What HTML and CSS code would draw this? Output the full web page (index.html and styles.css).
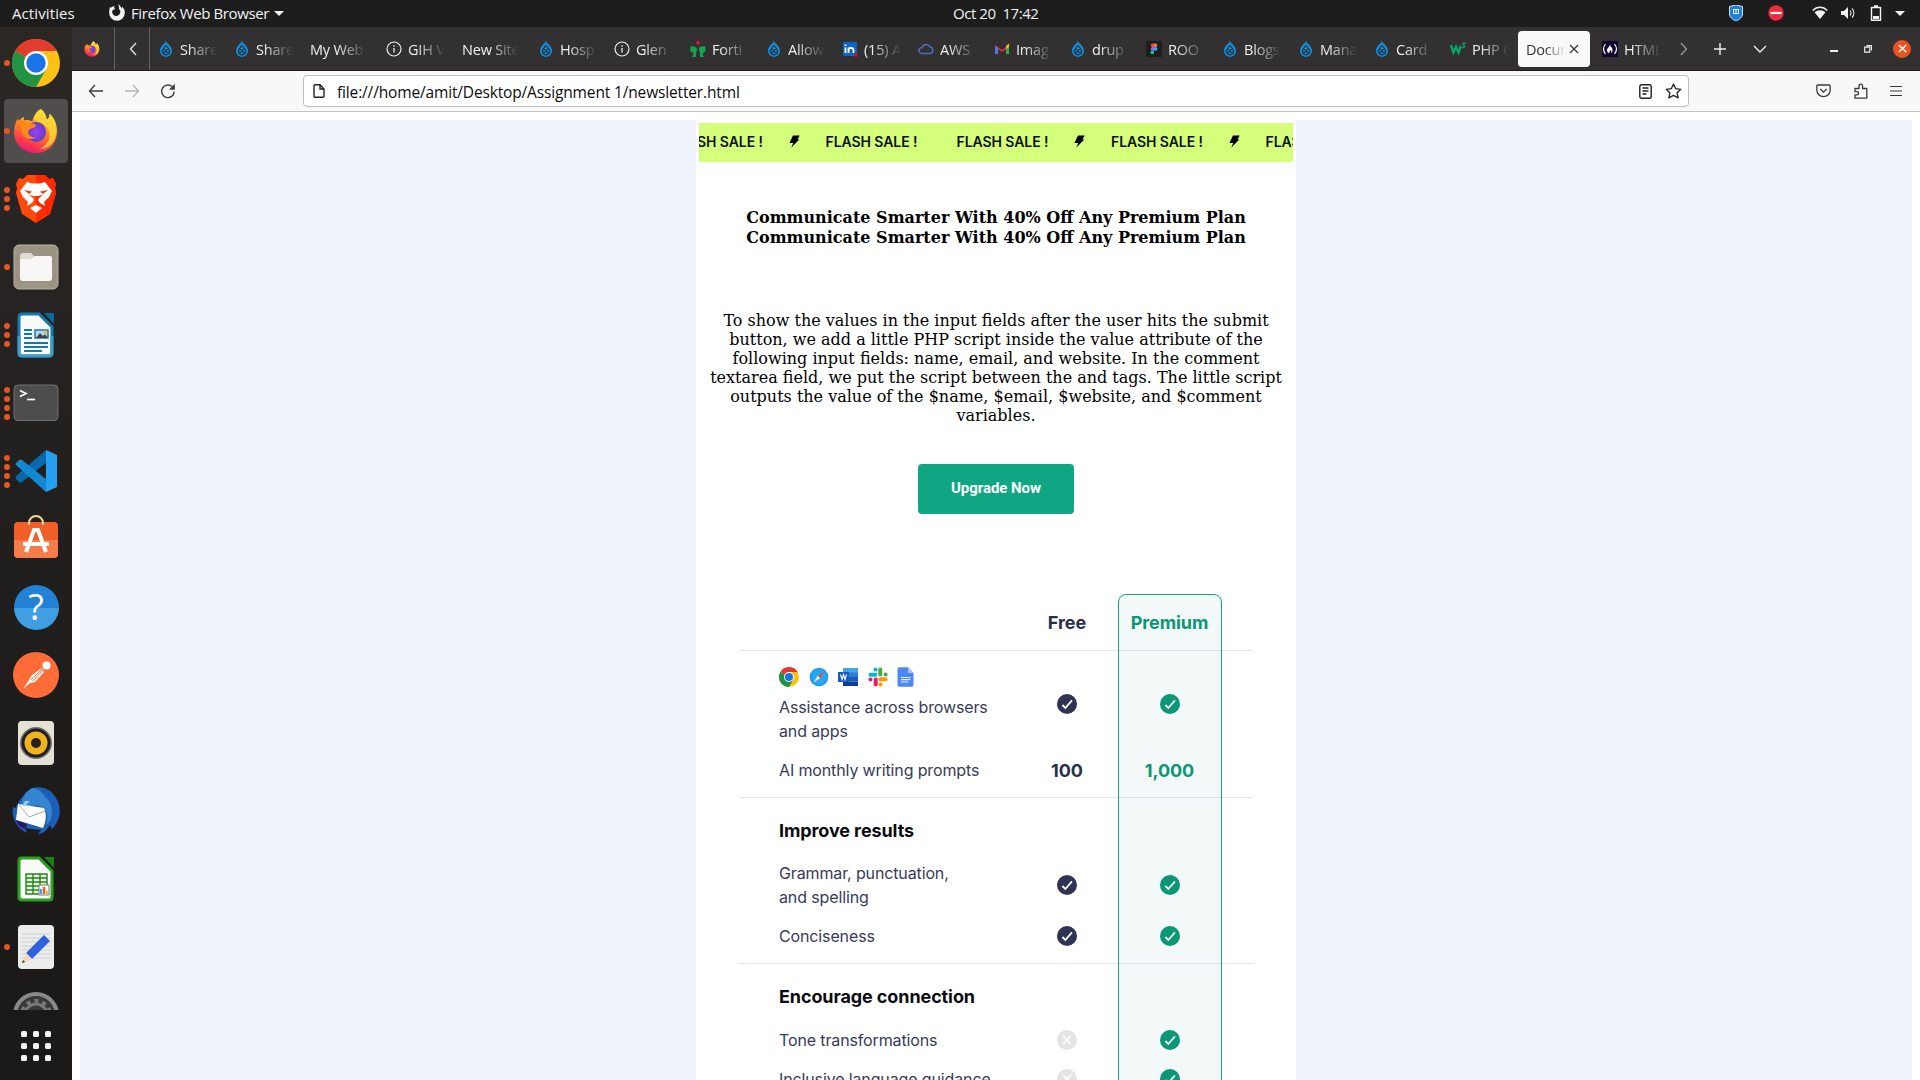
FILE: index.html
```html
<!DOCTYPE html>
<html lang="en">
<head>
<meta charset="utf-8">
<title>Document</title>
<link rel="stylesheet" href="styles.css">
</head>
<body>
<svg class="defs" width="0" height="0">
  <defs>
    <symbol id="drupal" viewBox="0 0 16 16"><path d="M8 0C7 2.500 2 4.800 2 10a6 6 0 0 0 12 0C14 4.800 9 2.500 8 0z" fill="#0c8fdc"/><path d="M8 4.500L10.800 8a3.500 3.500 0 1 1-5.600 0z M5.800 12.400l4-4.200M10.200 12.400L6 8.200" fill="none" stroke="#29303a" stroke-width="1.200"/></symbol>
    <symbol id="info" viewBox="0 0 16 16"><circle cx="8" cy="8" r="7" fill="none" stroke="#eee" stroke-width="1.200"/><path d="M8 7v4.500M8 4.300v1.400" stroke="#eee" stroke-width="1.300"/></symbol>
    <symbol id="chrome" viewBox="0 0 48 48"><circle cx="24" cy="24" r="24" fill="#fbc116"/><path d="M24 24L3.200 12A24 24 0 0 1 44.800 12z" fill="#e33b2e"/><path d="M24 24L3.200 12A24 24 0 0 0 24 48L34.400 30z" fill="#229342"/><path d="M24 12h20.800L34.400 30z" fill="#fbc116"/><circle cx="24" cy="24" r="12" fill="#fff"/><circle cx="24" cy="24" r="9.700" fill="#1a73e8"/></symbol>
    <symbol id="firefox" viewBox="0 0 48 48"><path d="M29 1c4 3 6 7 6 11 3-1 3-4 3-6 5 4 8 11 8 18C46 38 36 47 24 47S1 38 1 25c0-6 2-11 4-14l1 3c1-2 3-4 5-5l1 4c3-1 6 0 8 1 2-7 5-11 9-13z" fill="url(#ffg)"/><path d="M29 1c4 3 6 7 6 11 3-1 3-4 3-6 7 6 9 16 6 25-3 8-10 12-17 12 10-4 14-14 9-22-3-5-12-8-14-9 1-5 3-8 7-11z" fill="#ffd83a" opacity=".8"/><circle cx="24" cy="25" r="10.500" fill="url(#ffp)"/><path d="M5 13c5-1 9 2 12 3 4 0 7 1 7 3-2 2-7 2-8 5-1 4 3 7 8 7-8 4-15-1-15-8 0-4-2-6-4-10z" fill="#ff8a16"/></symbol>
    <linearGradient id="ffg" x1=".7" y1="0" x2=".3" y2="1"><stop offset="0" stop-color="#ffe53b"/><stop offset=".45" stop-color="#ff8a1e"/><stop offset=".8" stop-color="#ff3750"/><stop offset="1" stop-color="#e5157a"/></linearGradient>
    <radialGradient id="ffp"><stop offset="0" stop-color="#a63bf0"/><stop offset="1" stop-color="#5a42c8"/></radialGradient>
    <symbol id="yes" viewBox="0 0 20 20"><circle cx="10" cy="10" r="10" fill="currentColor"/><path d="M5.400 11l2.900 3L15 6.400" fill="none" stroke="#fff" stroke-width="1.800"/></symbol>
    <symbol id="no" viewBox="0 0 20 20"><circle cx="10" cy="10" r="10" fill="#e4e4e4"/><path d="M6 5.800l8 8.400M14 5.800l-8 8.400" stroke="#fff" stroke-width="1.700"/></symbol>
    <symbol id="bolt" viewBox="0 0 11 13"><path d="M4 .5h6.700L8.500 4.500h1.800L2.200 12.700 4.200 8H.4z" fill="#000"/></symbol>
  </defs>
</svg>

<div class="desktop">
  <header class="topbar">
    <span class="activities">Activities</span>
    <span class="app-menu"><svg width="16" height="18" viewBox="0 0 16 18"><path d="M9 0c1 2 1 3 1 5a4 4 0 1 1-6.500 1.500C4 5 6 5.500 6.500 5 5 4.500 5 3 5.500 2 4 2 2.500 3 2 4L1.500 2.500C.5 4 .2 6 .2 9a7.800 7.800 0 0 0 15.600 0c0-3-1-5-3-6.500V5C12 3 11 1 9 0z" fill="#f2f2f2"/></svg><span class="app-name">Firefox Web Browser</span><i class="caret"></i></span>
    <span class="clock">Oct 20&nbsp; 17:42</span>
    <span class="tray">
      <svg width="14" height="16" viewBox="0 0 14 16"><path d="M7 0l6.500 1.500V9c0 3-3 5.500-6.500 7C3.500 14.500.5 12 .5 9V1.500z" fill="#1a80d8" stroke="#c9e2f5"/><path d="M4.500 4.500h5v4h-5z" stroke="#fff" fill="none"/><path d="M7 5v3" stroke="#fff"/></svg>
      <svg class="dnd" width="16" height="16" viewBox="0 0 16 16"><circle cx="8" cy="8" r="7.700" fill="#f32a3c"/><path d="M2.500 8h11" stroke="#fff" stroke-width="2.200"/></svg>
      <svg class="wifi" width="16" height="14" viewBox="0 0 16 14"><path d="M.8 4.500C5 .2 11 .2 15.200 4.500" fill="none" stroke="#eee" stroke-width="1.500"/><path d="M2.500 6.200C6 3.500 10 3.500 13.500 6.200L8 13z" fill="#f2f2f2"/></svg>
      <svg class="vol" width="16" height="14" viewBox="0 0 16 14"><path d="M1 5h3l4-4v12L4 9H1z" fill="#f2f2f2"/><path d="M10 4.500c1.300 1.500 1.300 3.500 0 5M12 2.500c2.500 2.500 2.500 6.500 0 9" fill="none" stroke="#ddd" stroke-width="1.100"/></svg>
      <svg class="batt" width="12" height="16" viewBox="0 0 12 16"><path d="M1.500 2.500h9v12.700h-9zM4 1h4" fill="none" stroke="#f2f2f2" stroke-width="1.400"/><path d="M3 11h6v3H3z" fill="#f2f2f2"/></svg>
      <i class="caret"></i>
    </span>
  </header>

  <div class="workspace">
    <nav class="dock">
      <div class="apps">
        <div class="app"><span class="dots"><i></i></span><svg width="48" height="48"><use href="#chrome"/></svg></div>
        <div class="app current"><span class="dots"><i></i></span><svg width="46" height="46"><use href="#firefox"/></svg></div>
        <div class="app"><span class="dots"><i></i><i></i><i></i></span><svg width="42" height="50" viewBox="0 0 42 50"><path d="M12 1h18l4 4 4-1 3 6-1 4 1 5-6 21-14 9L7 40 1 19l1-5-1-4 3-6 4 1z" fill="#ff4a0a"/><path d="M21 1h9l4 4 4-1 3 6-1 4 1 5-6 21-14 9z" fill="#ff2000" opacity=".8"/><path d="M12 8l5 1.500h8L30 8l7 9-3 6-5 5 1 4-5-3-2-3 1-2 4-3-5 1h-4l-5-1 4 3 1 2-2 3-5 3 1-4-5-5-3-6z" fill="#fff"/><path d="M9 16l8 1.500-3 2.500zM33 16l-8 1.500 3 2.500z" fill="#f5380f"/><path d="M21 31l6 3-6 5-6-5z" fill="#fff"/></svg></div>
        <div class="app"><span class="dots"><i></i></span><svg width="46" height="46" viewBox="0 0 46 46"><rect x="1" y="1" width="44" height="44" rx="5" fill="#9c9482" stroke="#b9b3a4"/><path d="M7 12q0-3 3-3h8l4 4h14q2 0 2 3v4H7z" fill="#dedbd0"/><path d="M7 17q0-2 2-2h9l4-3h15q2 0 2 2v20q0 3-3 3H10q-3 0-3-3z" fill="#f8f7f5"/></svg></div>
        <div class="app"><span class="dots"><i></i><i></i><i></i></span><svg width="38" height="46" viewBox="0 0 38 46"><path d="M5 2h17l13 13v26q0 3-3 3H5q-3 0-3-3V5q0-3 3-3z" fill="#fafafa" stroke="#1679ae" stroke-width="3"/><path d="M2 24v17q0 3 3 3h27q3 0 3-3V24" fill="none" stroke="#3c9bcb" stroke-width="3"/><path d="M27 1h10v11z" fill="#0b6ba0"/><path d="M7 18h8M7 22h8M7 26h8M7 31h24M7 35h24M7 39h18" stroke="#1679ae" stroke-width="2"/><path d="M18 18h13v8H18z" fill="#b5d9ed" stroke="#1679ae" stroke-width="1.500"/><path d="M19 26l4-5 3 3 2-2 3 4z" fill="#444"/><circle cx="28.500" cy="20" r="1.700" fill="#f4ba1c"/></svg></div>
        <div class="app"><span class="dots"><i></i><i></i><i></i><i></i></span><svg width="46" height="38" viewBox="0 0 46 38"><rect x="1" y="1" width="44" height="35.500" rx="4" fill="#4d4d4d" stroke="#707070"/><path d="M7 6.500l6 3-6 3" fill="none" stroke="#fff" stroke-width="1.700"/><path d="M14 15.500h8" stroke="#fff" stroke-width="1.700"/></svg></div>
        <div class="app"><span class="dots"><i></i><i></i><i></i><i></i></span><svg width="42" height="42" viewBox="0 0 42 42"><path d="M31 0L1 26q-1 2 0 3l3 3q1 1 3 0L32 12z" fill="#0768ab"/><path d="M4 10q2-1 3 0l25 20-1 12L1 15q-1-1 0-2z" fill="#1288d3"/><path d="M31 0l11 5v32l-11 5z" fill="#26a0f3"/></svg></div>
        <div class="app"><svg class="shop" width="46" height="46" viewBox="0 0 46 46"><rect x="1" y="8" width="44" height="36" rx="4" fill="#f05f28"/><path d="M1 26h44v14q0 4-4 4H5q-4 0-4-4z" fill="#f67c4c"/><path d="M16 11V9a7 7 0 0 1 14 0v2" fill="none" stroke="#f8d5a5" stroke-width="2"/><path d="M13 38l8-22h4l8 22M10 30h26" fill="none" stroke="#fff" stroke-width="4"/></svg></div>
        <div class="app"><span class="help">?</span></div>
        <div class="app"><svg width="46" height="46" viewBox="0 0 46 46"><circle cx="23" cy="23" r="23" fill="#ff6c37"/><circle cx="33.500" cy="13.500" r="4" fill="#fff"/><path d="M29 16l2 4-9 10-5 1-7 6 6-9 3-5z" fill="#fff"/><path d="M18 28l11-11M20 29l10-11" stroke="#ff6c37"/></svg></div>
        <div class="app"><svg width="38" height="46" viewBox="0 0 38 46"><rect x="1" y="1" width="36" height="44" rx="4" fill="#e5e0d4"/><circle cx="19" cy="23" r="16" fill="#747171"/><circle cx="19" cy="23" r="14.500" fill="#211e2c"/><circle cx="19" cy="23" r="11.500" fill="#efb41b"/><circle cx="19" cy="23" r="5" fill="#222"/></svg></div>
        <div class="app"><svg width="48" height="48" viewBox="0 0 48 48"><path d="M20 1c8-2 17 0 22 7 8 10 8 23-2 34l-2-4c-3 5-7 9-12 9l3-4-16-2 2 5C4 41-1 30 1 20l3 1C6 14 11 9 12 8c2-4 6-5 8-7z" fill="#1d5fb8"/><path d="M20 1c6 1 11 4 13 9 7 5 9 14 5 24l-4 4c3-9 1-16-6-19-6-2-13 0-18 5-2-7 1-18 10-23z" fill="#3585d0"/><path d="M6 17l26 4c3 7 2 13-1 20L4 33z" fill="#fff"/><path d="M7 18l10 12 16-6" fill="none" stroke="#aaa"/><path d="M13 14q-3 4-1 6l6-6z" fill="#8fd0f0"/><path d="M4 33l11 4-1 5C9 41 5 38 4 33z" fill="#2b1669"/></svg></div>
        <div class="app"><svg width="38" height="46" viewBox="0 0 38 46"><path d="M5 2h17l13 13v26q0 3-3 3H5q-3 0-3-3V5q0-3 3-3z" fill="#fafafa" stroke="#2aa01f" stroke-width="3"/><path d="M27 1h10v11z" fill="#168016"/><path d="M9 18h21v20H9zM9 22h21M9 26h21M9 30h21M9 34h21M16 18v20M23 18v20" fill="#e7f6e3" stroke="#27831b" stroke-width="1.400"/><path d="M22 29h10v10H22z" fill="#fff" stroke="#777"/><path d="M24 33v5" stroke="#35a7dc" stroke-width="2"/><path d="M27 31v7" stroke="#e85d21" stroke-width="2.500"/><path d="M30 35v3" stroke="#f4bd23" stroke-width="2"/></svg></div>
        <div class="app"><span class="dots"><i></i></span><svg width="38" height="46" viewBox="0 0 38 46"><rect x="1" y="1" width="36" height="44" rx="4" fill="#ececec"/><path d="M5 10h28M5 14h28M5 18h28M5 22h28M5 26h28M5 30h28M5 34h28" stroke="#d0d0d0"/><path d="M27 11l6 6-18 18-6-6z" fill="#2e61dd"/><path d="M9 29l6 6-10 4z" fill="#f5d8b6"/><path d="M6 36l2 2-3 1z" fill="#333"/></svg></div>
        <div class="app"><svg width="46" height="46" viewBox="0 0 46 46"><circle cx="23" cy="23" r="21" fill="#393939" stroke="#898989" stroke-width="4"/><circle cx="23" cy="23" r="11" fill="none" stroke="#777" stroke-width="3"/><circle cx="23" cy="23" r="14" fill="none" stroke="#777" stroke-width="4" stroke-dasharray="4 4"/></svg></div>
      </div>
      <div class="grid-button"><i></i><i></i><i></i><i></i><i></i><i></i><i></i><i></i><i></i></div>
    </nav>

    <main class="browser">
      <div class="tabbar">
        <div class="pinned"><svg width="16" height="16"><use href="#firefox"/></svg></div>
        <div class="scroll"><svg width="8" height="14" viewBox="0 0 8 14"><path d="M7 1L1.500 7 7 13" fill="none" stroke="#ddd" stroke-width="1.400"/></svg></div>
        <div class="tabs">
          <div class="tab"><svg class="fav"><use href="#drupal"/></svg><span>Share</span></div>
          <div class="tab"><svg class="fav"><use href="#drupal"/></svg><span>Share</span></div>
          <div class="tab"><span>My Web</span></div>
          <div class="tab"><svg class="fav"><use href="#info"/></svg><span>GIH V</span></div>
          <div class="tab"><span>New Site</span></div>
          <div class="tab"><svg class="fav"><use href="#drupal"/></svg><span>Hosp</span></div>
          <div class="tab"><svg class="fav"><use href="#info"/></svg><span>Glen</span></div>
          <div class="tab"><svg class="fav" viewBox="0 0 16 16"><circle cx="8" cy="1.800" r="1.800" fill="#e5173f"/><path d="M1 5c3 1 5 0 6 3 0 3-2 4-1 5v3H2c2-3 2-4 0-5-2 0-2-3-1-6zM15 5c-3 1-6 0-6 3 0 3 2 4 1 5v3h4c-2-3-1-4 0-5 2 0 2-3 1-6z" fill="#10a84c"/></svg><span>Forti</span></div>
          <div class="tab"><svg class="fav"><use href="#drupal"/></svg><span>Allow</span></div>
          <div class="tab"><svg class="fav" viewBox="0 0 16 16"><rect x="1" y="1" width="14" height="14" rx="1" fill="#0a66c2"/><path d="M3.500 6.500V12M3.500 3.500v1.500M6.500 12V6.500M6.500 9q0-2 2.500-2t2.500 2v3" fill="none" stroke="#fff" stroke-width="1.800"/><circle cx="14" cy="14" r="2" fill="#d11124"/></svg><span>(15) A</span></div>
          <div class="tab"><svg class="fav" viewBox="0 0 16 16"><path d="M4 12.500a3 3 0 0 1 0-6 4.300 4.300 0 0 1 8-.5 3.300 3.300 0 0 1 0 6.500z" fill="none" stroke="#4a6fc0" stroke-width="1.400"/></svg><span>AWS</span></div>
          <div class="tab"><svg class="fav" viewBox="0 0 16 16"><path d="M1 13V4l7 5 7-5v9h-3V8l-4 3-4-3v5z" fill="#ea2f35"/><path d="M1 5v8h3V7z" fill="#4b79ee"/><path d="M12 7v6h3V5z" fill="#35a853"/><path d="M12 5l3-2.500V6l-3 2z" fill="#fbbc04"/></svg><span>Imag</span></div>
          <div class="tab"><svg class="fav"><use href="#drupal"/></svg><span>drup</span></div>
          <div class="tab"><svg class="fav" viewBox="0 0 16 16"><path d="M0 0h16v16H0z" fill="#1e1e1e"/><path d="M8 2.500H6.500a1.800 1.800 0 0 0 0 3.600H8z" fill="#f24e1e"/><path d="M8 2.500h1.500a1.800 1.800 0 0 1 0 3.600H8z" fill="#ff7262"/><path d="M8 6.100H6.500a1.800 1.800 0 0 0 0 3.600H8z" fill="#a259ff"/><circle cx="9.600" cy="7.900" r="1.800" fill="#1abcfe"/><path d="M8 9.700H6.500A1.800 1.800 0 1 0 8 11.500z" fill="#0acf83"/></svg><span>ROO</span></div>
          <div class="tab"><svg class="fav"><use href="#drupal"/></svg><span>Blogs</span></div>
          <div class="tab"><svg class="fav"><use href="#drupal"/></svg><span>Mana</span></div>
          <div class="tab"><svg class="fav"><use href="#drupal"/></svg><span>Card</span></div>
          <div class="tab"><svg class="fav" viewBox="0 0 16 16"><path d="M.8 4l2.700 7.500L6 6l2.500 5.500L10.800 5" fill="none" stroke="#05a467" stroke-width="2.500"/><path d="M12 2h3l-2 2.200q2 0 1.500 1.800-.5 1-2.500.5" fill="none" stroke="#05a467" stroke-width="1.200"/></svg><span>PHP C</span></div>
          <div class="tab active"><span>Docum</span><svg width="10" height="10" viewBox="0 0 10 10"><path d="M1 1l8 8M9 1L1 9" stroke="#333" stroke-width="1.200"/></svg></div>
          <div class="tab"><svg class="fav" viewBox="0 0 16 16"><path d="M0 0h16v16H0z" fill="#12062e"/><path d="M3.500 3q-4 5 0 10M12.500 3q4 5 0 10" fill="none" stroke="#fff" stroke-width="1.200"/><path d="M8 3c0 3 2.500 3 2.500 6 0 2-.5 3-1.500 3 1-2 0-2-.5-3 0 1-1.500 1-1 3-2 0-2.500-1.500-2.500-3 0-2 3-3 3-6z" fill="#fff"/></svg><span>HTML</span></div>
        </div>
        <div class="tab-actions">
          <svg class="more" width="8" height="14" viewBox="0 0 8 14"><path d="M1 1l5.500 6L1 13" fill="none" stroke="#999" stroke-width="1.300"/></svg>
          <svg class="plus" width="12" height="12" viewBox="0 0 12 12"><path d="M6 0v12M0 6h12" stroke="#eee" stroke-width="1.400"/></svg>
          <svg class="list" width="14" height="8" viewBox="0 0 14 8"><path d="M1 1l6 6 6-6" fill="none" stroke="#eee" stroke-width="1.400"/></svg>
          <i class="minimize"></i>
          <svg class="restore" width="8" height="8" viewBox="0 0 8 8"><path d="M.7 2.200h5v5h-5zM2.500.6h5v5" fill="none" stroke="#eee" stroke-width="1.200"/></svg>
          <span class="close"><svg width="9" height="9" viewBox="0 0 10 10"><path d="M1 1l8 8M9 1L1 9" stroke="#fff" stroke-width="1.500"/></svg></span>
        </div>
      </div>

      <div class="navbar">
        <div class="nav-buttons">
          <svg width="16" height="14" viewBox="0 0 16 14"><path d="M15 7H1.500M7 1L1.500 7 7 13" fill="none" stroke="#3a3a3a" stroke-width="1.300"/></svg>
          <svg width="16" height="14" viewBox="0 0 16 14"><path d="M1 7h13.500M9 1l5.500 6L9 13" fill="none" stroke="#b5b5b5" stroke-width="1.300"/></svg>
          <svg width="16" height="16" viewBox="0 0 16 16"><path d="M14.200 8.500A6.300 6.300 0 1 1 12 3.500" fill="none" stroke="#3a3a3a" stroke-width="1.400"/><path d="M14.800.8v6H9z" fill="#3a3a3a"/></svg>
        </div>
        <div class="urlbar">
          <svg width="12" height="14" viewBox="0 0 12 14"><path d="M1 2q0-1.200 1.200-1.200H7L11 5v7q0 1.200-1.200 1.200H2.200Q1 13.200 1 12zM7 1v4h4" fill="none" stroke="#222" stroke-width="1.400"/></svg>
          <span class="url">file:///home/amit/Desktop/Assignment 1/newsletter.html</span>
          <svg class="reader" width="13" height="15" viewBox="0 0 13 15"><rect x=".8" y=".8" width="11.400" height="13.400" rx="1.800" fill="none" stroke="#222" stroke-width="1.400"/><path d="M3.500 4h6M3.500 7h6M3.500 10h4" stroke="#222" stroke-width="1.300"/></svg>
          <svg width="17" height="16" viewBox="0 0 17 16"><path d="M8.500 1l2.200 4.700 5.100.6-3.700 3.500 1 5.100-4.600-2.500-4.600 2.500 1-5.100L1.200 6.300l5.100-.6z" fill="none" stroke="#222" stroke-width="1.300" stroke-linejoin="round"/></svg>
        </div>
        <div class="nav-tools">
          <svg width="15" height="14" viewBox="0 0 15 14"><path d="M2 1h11q1.200 0 1.200 1.200V6a6.700 6.700 0 0 1-13.400 0V2.200Q.8 1 2 1zM4.300 5l3.200 3.200L10.700 5" fill="none" stroke="#3a3a3a" stroke-width="1.300"/></svg>
          <svg width="14" height="16" viewBox="0 0 14 16"><path d="M1 5.500h4V3a1.800 1.800 0 0 1 3.600 0v2.500h4.200v9.700H1v-3.400h2a1.600 1.600 0 0 0 0-3.200H1z" fill="none" stroke="#3a3a3a" stroke-width="1.300" stroke-linejoin="round"/></svg>
          <svg width="12" height="12" viewBox="0 0 12 12"><path d="M0 1.500h12M0 6h12M0 10.500h12" stroke="#3a3a3a" stroke-width="1.200"/></svg>
        </div>
      </div>

      <div class="viewport">
        <div class="backdrop">
          <article class="letter">
            <div class="banner">
              <div class="track">
                <span>FLASH SALE !</span><svg><use href="#bolt"/></svg><span>FLASH SALE !</span>
                <span class="next">FLASH SALE !</span><svg><use href="#bolt"/></svg><span>FLASH SALE !</span><svg><use href="#bolt"/></svg><span>FLASH SALE !</span>
              </div>
            </div>
            <h1 class="title">Communicate Smarter With 40% Off Any Premium Plan<br>Communicate Smarter With 40% Off Any Premium Plan</h1>
            <p class="intro">To show the values in the input fields after the user hits the submit<br>button, we add a little PHP script inside the value attribute of the<br>following input fields: name, email, and website. In the comment<br>textarea field, we put the script between the and tags. The little script<br>outputs the value of the $name, $email, $website, and $comment<br>variables.</p>
            <a class="upgrade">Upgrade Now</a>

            <section class="plans">
              <div class="row head"><span></span><b>Free</b><b class="premium">Premium</b></div>
              <div class="group first">
                <div class="row">
                  <div class="label">
                    <div class="brands">
                      <svg width="20" height="20"><use href="#chrome"/></svg>
                      <svg width="20" height="20" viewBox="0 0 20 20"><circle cx="10" cy="10" r="9.300" fill="#2694ee"/><circle cx="10" cy="10" r="7.700" fill="#1eaaf4"/><path d="M15.500 4.500L8.800 8.800l2.400 2.400z" fill="#ef4836"/><path d="M4.500 15.500l4.300-6.700 2.400 2.400z" fill="#f1f1f1"/></svg>
                      <svg width="20" height="20" viewBox="0 0 20 20"><path d="M5 1h15v5H5z" fill="#41a5ee"/><path d="M5 5.500h15V10H5z" fill="#2b7cd3"/><path d="M5 10h15v4.500H5z" fill="#185abd"/><path d="M5 14.500h15V19H5z" fill="#103f91"/><path d="M0 5h11v10H0z" fill="#185abd"/><path d="M2.500 7.500l1.500 5 1.500-5 1.500 5 1.500-5" fill="none" stroke="#fff" stroke-width="1.100"/></svg>
                      <svg width="20" height="20" viewBox="0 0 20 20"><g fill="none" stroke-width="4" stroke-linecap="round"><path d="M12.300 2.500v5" stroke="#44ac48"/><path d="M12.500 12.300h5" stroke="#ff9800"/><path d="M7.700 12.500v5" stroke="#e91e63"/><path d="M2.500 7.700h5" stroke="#00bcd4"/></g><circle cx="7.500" cy="2.400" r="2" fill="#00bcd4"/><circle cx="17.600" cy="7.600" r="2" fill="#44ac48"/><circle cx="12.400" cy="17.600" r="2" fill="#ff9800"/><circle cx="2.400" cy="12.400" r="2" fill="#e91e63"/></svg>
                      <svg width="17" height="20" viewBox="0 0 17 20"><path d="M2 .3h9L16.500 6v12q0 1.700-1.700 1.700H2Q.5 19.700.5 18V2Q.5.300 2 .300z" fill="#4b87f5"/><path d="M11 .3L16.500 6H11z" fill="#a4c3fa"/><path d="M4 10.500h9.500M4 12.700h9.500M4 15h7" stroke="#e7effe" stroke-width="1.200"/></svg>
                    </div>
                    Assistance across browsers<br>and apps
                  </div>
                  <svg class="mark"><use href="#yes"/></svg><svg class="mark premium"><use href="#yes"/></svg>
                </div>
                <div class="row"><div class="label">AI monthly writing prompts</div><b>100</b><b class="premium">1,000</b></div>
              </div>
              <div class="group improve">
                <h2>Improve results</h2>
                <div class="row"><div class="label">Grammar, punctuation,<br>and spelling</div><svg class="mark"><use href="#yes"/></svg><svg class="mark premium"><use href="#yes"/></svg></div>
                <div class="row"><div class="label">Conciseness</div><svg class="mark"><use href="#yes"/></svg><svg class="mark premium"><use href="#yes"/></svg></div>
              </div>
              <div class="group">
                <h2>Encourage connection</h2>
                <div class="row"><div class="label">Tone transformations</div><svg class="mark"><use href="#no"/></svg><svg class="mark premium"><use href="#yes"/></svg></div>
                <div class="row"><div class="label">Inclusive language guidance</div><svg class="mark"><use href="#no"/></svg><svg class="mark premium"><use href="#yes"/></svg></div>
              </div>
              <div class="highlight"></div>
            </section>
          </article>
        </div>
      </div>
    </main>
  </div>
</div>
</body>
</html>
```
FILE: styles.css
```css
* { box-sizing: border-box; }
body { margin: 0; overflow: hidden; background: #fff; }
svg { display: block; flex: none; }
.defs { position: absolute; }
.desktop { width: 1920px; height: 1080px; display: flex; flex-direction: column; overflow: hidden; font: 14px "Open Sans", "Noto Sans", sans-serif; }

.topbar { flex: none; height: 27px; background: #1d1d1d; color: #f2f2f2; display: grid; grid-template-columns: 1fr auto 1fr; grid-template-areas: "left clock tray"; align-items: center; padding: 0 12px 1px; font-size: 15px; line-height: 20px; }
.activities { grid-area: left; letter-spacing: .1px; }
.app-menu { grid-area: left; display: flex; align-items: center; gap: 6px; margin-left: 97px; }
.app-name { width: 137px; letter-spacing: -.39px; white-space: nowrap; }
.caret { width: 0; border: 5px solid transparent; border-top-color: #f2f2f2; border-bottom: 0; }
.clock { grid-area: clock; width: 88px; margin-right: -74px; letter-spacing: -.45px; white-space: nowrap; }
.tray { grid-area: tray; display: flex; align-items: center; justify-content: flex-end; padding-right: 3px; }
.dnd { margin-left: 25px; }
.wifi { margin-left: 28px; }
.vol { margin-left: 12px; }
.batt { margin-left: 14px; }
.tray .caret { margin-left: 13px; }

.workspace { flex: 1; min-height: 0; display: flex; }
.dock { width: 72px; flex: none; background: linear-gradient(#2a2725, #211f1e 50%, #1a1918); display: flex; flex-direction: column; align-items: center; padding-top: 4px; }
.apps { height: 979px; width: 72px; overflow: hidden; }
.app { width: 64px; height: 64px; margin: 0 4px 4px; border-radius: 4px; display: flex; align-items: center; justify-content: center; position: relative; }
.app.current { background: #504e4d; }
.dots { position: absolute; left: 0; top: 0; height: 64px; display: flex; flex-direction: column; justify-content: center; gap: 3px; }
.dots i { width: 6px; height: 6px; border-radius: 50%; background: #e95420; }
.help { width: 45px; height: 45px; border-radius: 50%; background: linear-gradient(#2382d6 50%, #3f9fe2 50%); color: #fff; font: 36px/43px "Open Sans", sans-serif; text-align: center; }
.shop { margin-top: -5px; }
.grid-button { display: grid; grid-template-columns: repeat(3, 6px); gap: 6px; margin-top: 21px; }
.grid-button i { width: 6px; height: 6px; border-radius: 1.500px; background: #f1f1f1; }

.browser { flex: 1; min-width: 0; display: flex; flex-direction: column; background: #fff; }
.tabbar { flex: none; height: 44px; background: #333031; border-bottom: 1px solid #1f1c1d; display: flex; color: #f0f0f0; }
.pinned { width: 43px; padding-right: 2px; border-right: 1px solid #626060; display: flex; align-items: center; justify-content: center; }
.scroll { width: 35px; padding-left: 2px; border-right: 1px solid #626060; display: flex; align-items: center; justify-content: center; }
.tabs { display: flex; align-items: center; padding-top: 1px; }
.tab { width: 76px; height: 36px; padding: 0 7px 0 8px; display: flex; align-items: center; gap: 6px; }
.fav { width: 16px; height: 16px; }
.tab span { flex: 1; min-width: 0; overflow: hidden; white-space: nowrap; font-size: 14.500px; letter-spacing: -.2px; -webkit-mask-image: linear-gradient(90deg, #000 20%, transparent 95%); mask-image: linear-gradient(90deg, #000 20%, transparent 95%); }
.tab > span:first-child { -webkit-mask-image: linear-gradient(90deg, #000 45%, transparent 92%); mask-image: linear-gradient(90deg, #000 45%, transparent 92%); }
.tab.active { width: 72px; margin-right: 4px; background: #f9f9f9; color: #333; border-radius: 4px; gap: 0; padding-right: 11px; }
.tab-actions { flex: 1; display: flex; align-items: center; padding-left: 10px; }
.plus { margin-left: 26px; }
.list { margin-left: 27px; }
.minimize { width: 8px; height: 2px; background: #eee; margin: 5px 0 0 63px; }
.restore { margin-left: 26px; }
.close { width: 18px; height: 18px; border-radius: 50%; background: #e95420; display: flex; align-items: center; justify-content: center; margin-left: 21px; }

.navbar { flex: none; height: 41px; background: #f8f8f8; border-bottom: 1px solid #c4c4c4; display: flex; align-items: center; padding: 0 18px 0 16px; }
.nav-buttons { display: flex; align-items: center; gap: 20px; width: 215px; }
.urlbar { width: 1386px; height: 32px; border: 1px solid #bfbfbf; border-radius: 4px; background: #fff; display: flex; align-items: center; padding: 0 6px 0 9px; color: #0c0c0d; }
.url { flex: 1; margin-left: 12px; padding-top: 1px; font-size: 15.500px; letter-spacing: -.15px; white-space: nowrap; }
.reader { margin-right: 13px; }
.nav-tools { margin-left: auto; display: flex; align-items: center; gap: 22.500px; }

.viewport { flex: 1; min-height: 0; padding: 8px 8px 0; overflow: hidden; }
.backdrop { height: 100%; background: #eff3fc; overflow: hidden; }
.letter { width: 600px; margin: 0 auto; padding: 3px 3px 0; background: #fff; height: 1200px; display: flex; flex-direction: column; align-items: center; color: #000; }
.banner { width: 594px; height: 39px; flex: none; overflow: hidden; background: #d5ff7b; }
.track { width: 900px; height: 37px; display: flex; align-items: center; margin-left: -28px; font: 600 14px Inter, sans-serif; letter-spacing: -.07px; color: #0c100a; }
.track span { width: 92px; flex: none; white-space: nowrap; }
.track svg { width: 11px; height: 13px; margin: 0 26px 0 25.500px; }
.track .next { margin-left: 39px; }
.title { margin: 46px 0 0; font: bold 16px/20px "DejaVu Serif", serif; text-align: center; white-space: nowrap; }
.intro { margin: 63px 0 0; font: 16px/19px "DejaVu Serif", serif; text-align: center; white-space: nowrap; }
.upgrade { width: 156px; height: 50px; flex: none; margin-top: 39px; border-radius: 4px; background: #11a683; color: #fff; font: bold 15px/48px Roboto, "Liberation Sans", sans-serif; letter-spacing: -.05px; text-align: center; }

.plans { width: 514px; margin-top: 80px; position: relative; font: 16px/24px Inter, sans-serif; color: #373b59; }
.row { display: grid; grid-template-columns: 277px 102px 103px; align-items: center; justify-items: center; }
.row + .row { margin-top: 15px; }
.row b { padding-top: 2px; font-size: 18px; line-height: 22px; font-weight: 650; letter-spacing: -.07px; color: #2b2f4e; }
.row .premium { color: #0b9774; }
.head { height: 56px; }
.label { justify-self: start; padding-left: 40px; white-space: nowrap; letter-spacing: -.13px; }
.group { border-top: 1px solid #e4e5f1; padding: 21px 0 14px; }
.group.improve { padding-bottom: 15px; }
.group.improve h2 { margin-bottom: 18px; }
.group.first { padding: 14px 0 15px; }
.brands { display: flex; gap: 9.500px; margin-bottom: 8px; padding-top: 2px; }
.mark { width: 20px; height: 20px; color: #2f3453; }
.group h2 { margin: 0 0 19px; padding-left: 40px; font: 650 18px/24px Inter, sans-serif; letter-spacing: -.1px; color: #0b0c12; }
.highlight { position: absolute; left: 379px; top: 0; width: 104px; height: 700px; border: 1.500px solid #18a37c; border-radius: 8px; background: rgba(17, 140, 110, .05); }
```
